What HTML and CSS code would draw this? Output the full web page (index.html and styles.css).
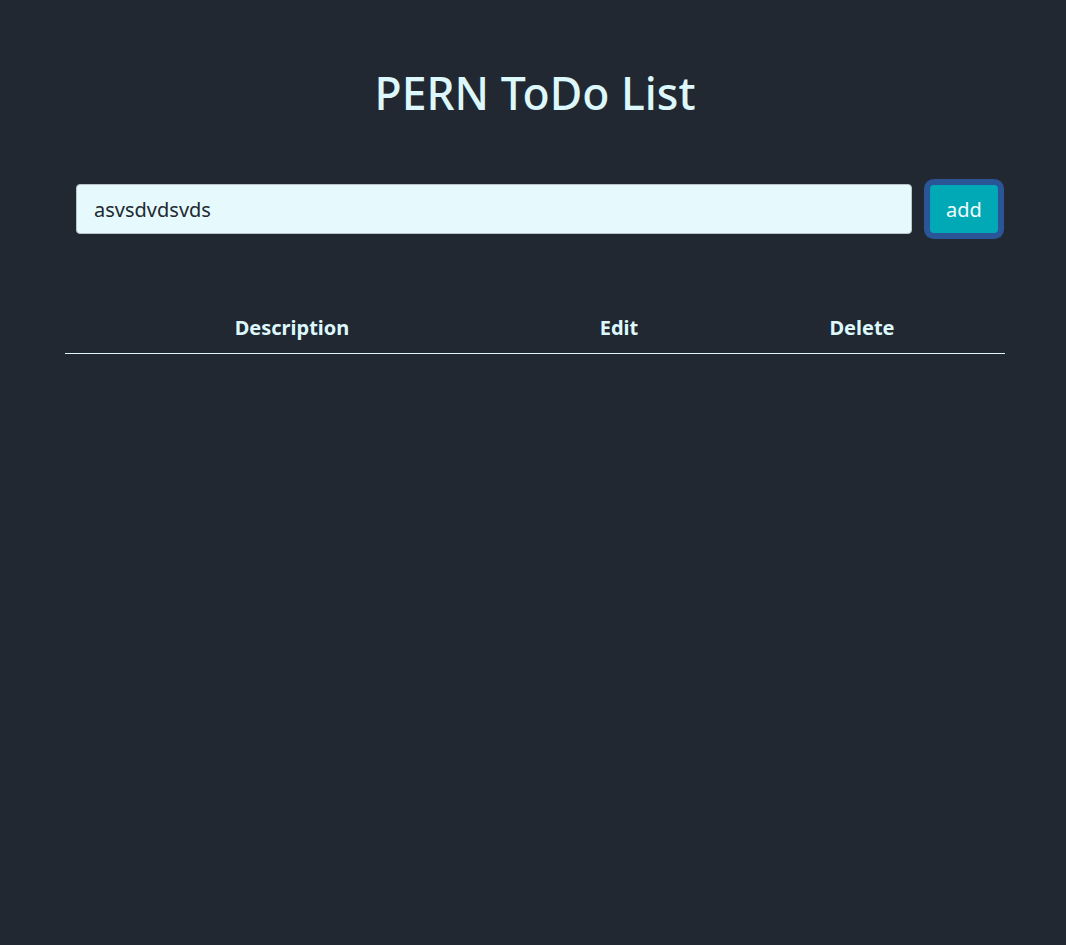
FILE: index.html
```html
<!DOCTYPE html>
<html>
<head>
<meta charset="utf-8">
<link rel="stylesheet" href="styles.css">
</head>
<body>
<div class="container">
  <h1 class="title">PERN ToDo List</h1>
  <form class="todo-form">
    <input class="todo-input" type="text" value="asvsdvdsvds">
    <button class="add-btn" type="button">add</button>
  </form>
  <table class="todo-table">
    <thead>
      <tr>
        <th class="col-desc">Description</th>
        <th class="col-edit">Edit</th>
        <th class="col-del">Delete</th>
      </tr>
    </thead>
    <tbody></tbody>
  </table>
</div>
</body>
</html>
```
FILE: styles.css
```css
html, body {
  margin: 0;
  padding: 0;
  background: #222831;
  height: 100%;
}
body {
  font-family: "Noto Sans", "Open Sans", sans-serif;
  color: #dcf8fc;
}
.container {
  width: 940px;
  margin: 0 0 0 65px;
  padding-top: 60px;
}
.title {
  margin: 0;
  text-align: center;
  font-weight: 500;
  font-size: 44.5px;
  line-height: 66px;
  color: #dcf8fc;
}
.todo-form {
  display: flex;
  align-items: center;
  margin: 58px 7px 0 11px;
  gap: 18px;
}
.todo-input {
  flex: 1;
  height: 50px;
  box-sizing: border-box;
  border: 1px solid #b8c4c8;
  border-radius: 4px;
  background: #e6fafd;
  color: #222831;
  font-family: inherit;
  font-size: 20px;
  padding: 0 17px;
  outline: none;
}
.add-btn {
  width: 68px;
  height: 48px;
  box-sizing: border-box;
  border: none;
  border-radius: 4px;
  background: #00a9b5;
  color: #f2fdff;
  font-family: inherit;
  font-size: 20px;
  box-shadow: 0 0 0 6px #2a5698;
  padding: 0;
}
.todo-table {
  width: 100%;
  margin-top: 74px;
  border-collapse: collapse;
}
.todo-table th {
  font-weight: 700;
  font-size: 20px;
  text-align: center;
  padding: 6px 0 12px;
  border-bottom: 1px solid #dcf8fc;
  color: #dcf8fc;
}
.col-desc { width: 454px; }
.col-edit { width: 200px; }
.col-del { width: 286px; }
```
